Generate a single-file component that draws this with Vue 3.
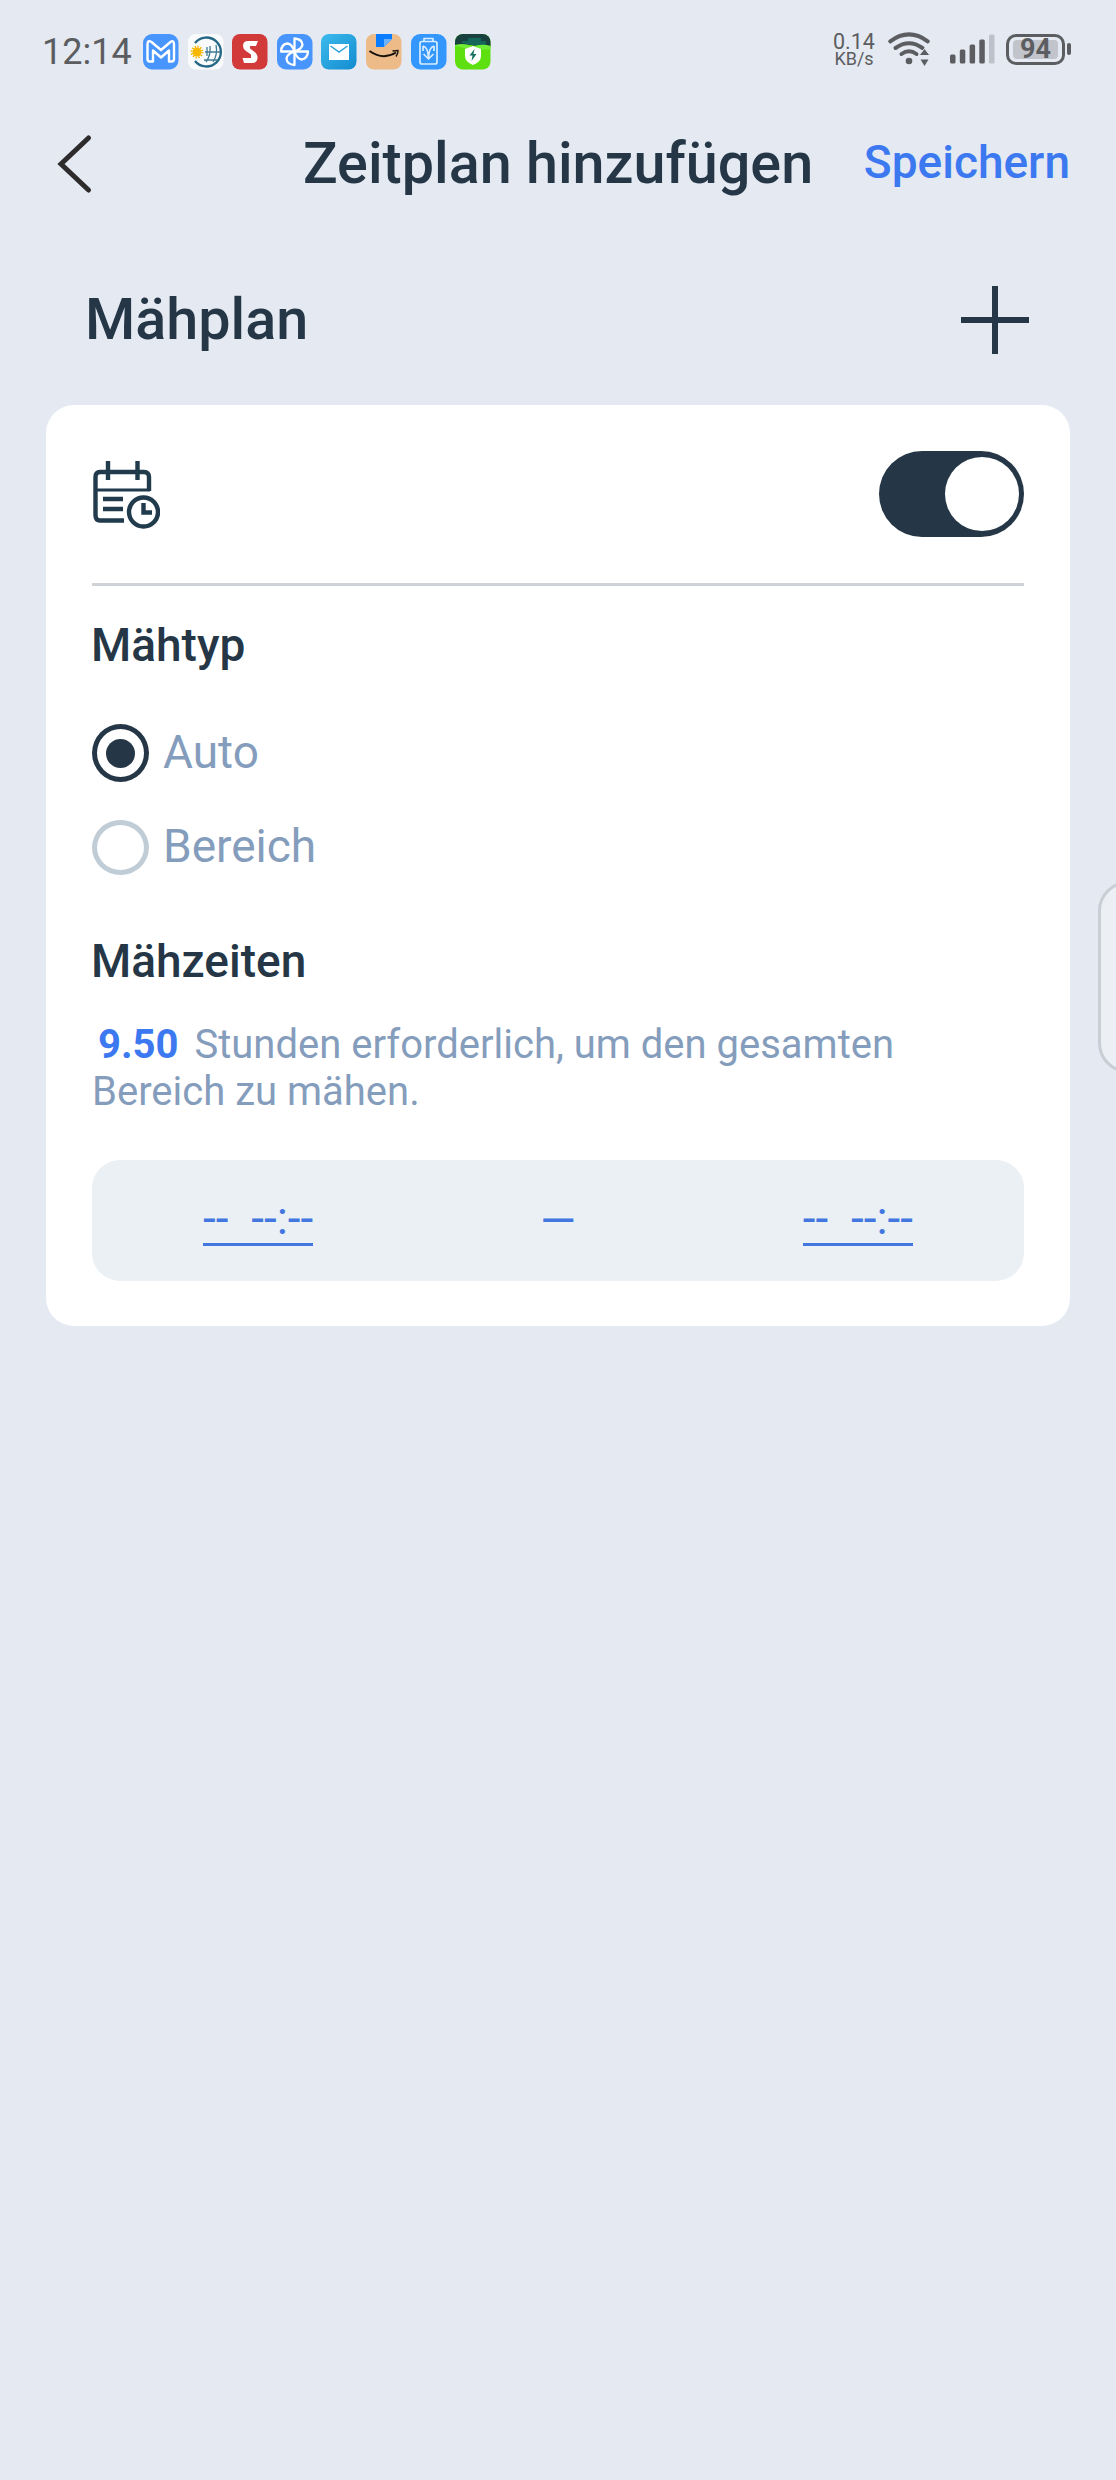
<script setup>
import { ref } from 'vue'

const enabled = ref(true)
const mowType = ref('auto')

const mowTypes = [
  { value: 'auto', label: 'Auto' },
  { value: 'area', label: 'Bereich' }
]

const requiredHours = '9.50'
const emptyTime = '--\u00a0\u00a0--:--'
</script>

<template>
  <div class="screen">
    <div class="status-bar">
      <span class="clock">12:14</span>
      <div class="apps">
        <svg viewBox="0 0 36 36">
          <rect width="35.5" height="35.5" rx="9" fill="#4896fd" />
          <path d="M4.500 25V10.500Q4.500 5.500 8.500 8L18 16L27.500 8Q31 5.500 31 10.500V25Q31 27.500 28.500 27.500H26V16.500L18 23.500L10 16.500V27.500H7Q4.500 27.500 4.500 25Z" fill="none" stroke="#fff" stroke-width="2.400" stroke-linejoin="round" />
        </svg>
        <svg viewBox="0 0 36 36">
          <rect width="35.5" height="35.5" rx="8" fill="#f9fafb" />
          <path d="M7 9A14.500 14.500 0 1 1 7 27" fill="none" stroke="#246786" stroke-width="2.300" />
          <path d="M17 18H32M16 26H30M22 12Q23 21 18 28M28 11Q30 20 25 28M19 13V22" fill="none" stroke="#407b94" stroke-width="1.300" />
          <circle cx="9" cy="18" r="4.500" fill="#f5b700" />
          <circle cx="9" cy="18" r="5.400" fill="none" stroke="#f5b700" stroke-width="2" stroke-dasharray="1.400 1.400" />
        </svg>
        <svg viewBox="0 0 36 36">
          <rect width="35.5" height="35.5" rx="8" fill="#d23939" />
          <path d="M26 7H16Q11 7 11 12Q11 15 14 17L19 20.500V24H10.500L12 29H20Q25.500 29 25.500 23.500Q25.500 20 22 17.500L18 14.500V12H24Z" fill="#fff" />
        </svg>
        <svg viewBox="0 0 36 36">
          <rect width="35.5" height="35.5" rx="9" fill="#4896fd" />
          <g fill="none" stroke="#fff" stroke-width="2.300" stroke-linejoin="round">
            <path d="M17.500 17.500V4.500Q25 5 25.500 10.500Q25 15 17.500 17.500" />
            <path d="M17.500 17.500H31Q30.500 25 24.500 25.500Q20 25 17.500 17.500" />
            <path d="M17.500 17.500V31Q10 30.500 9.500 24.500Q10 20 17.500 17.500" />
            <path d="M17.500 17.500H4Q4.500 10 10.500 9.500Q15 10 17.500 17.500" />
          </g>
        </svg>
        <svg viewBox="0 0 36 36">
          <defs>
            <linearGradient id="mail" x1="0" y1="0" x2="1" y2="1">
              <stop offset="0" stop-color="#3dbbed" />
              <stop offset="1" stop-color="#128bd0" />
            </linearGradient>
          </defs>
          <rect width="35.5" height="35.5" rx="8" fill="url(#mail)" />
          <rect x="8" y="10" width="20" height="16" fill="#fff" />
          <path d="M9.500 12L18 18L26.500 12" fill="none" stroke="#2ba4db" stroke-width="1.500" />
        </svg>
        <svg viewBox="0 0 36 36">
          <rect width="35.5" height="35.5" rx="8" fill="#ecbb88" />
          <path d="M10 0H26V5L18 13H10Z" fill="#0a7cff" />
          <path d="M18 5H26L18 13Z" fill="#6cb2f7" />
          <path d="M3.500 17Q17 26.500 30 18.500" fill="none" stroke="#17120d" stroke-width="2" />
          <path d="M26.500 17L32 16.500Q32.500 19 30 22.500" fill="none" stroke="#17120d" stroke-width="1.400" />
        </svg>
        <svg viewBox="0 0 36 36">
          <rect width="35.5" height="35.5" rx="9" fill="#3397fd" />
          <g fill="none" stroke="#d8edff" stroke-width="1.700" stroke-linejoin="round">
            <rect x="9" y="7.500" width="17" height="22.500" rx="2" />
            <path d="M13 7V4.500H22V7M12 12Q17 13 17.500 24Q18 13 23 12M12 12V17M23 12V17M12.500 20L17.500 25L22.500 20" />
          </g>
        </svg>
        <svg viewBox="0 0 36 36">
          <defs>
            <clipPath id="tile"><rect width="35.5" height="35.5" rx="8" /></clipPath>
          </defs>
          <g clip-path="url(#tile)">
            <rect width="36" height="36" fill="#5ee010" />
            <path d="M0 0H36V12Q28 15 22 12Q10 9 0 12Z" fill="#18403f" />
            <path d="M13 4H26V7H31V11Q21 13 7 9V7H13Z" fill="#14665a" />
            <path d="M0 11Q10 8 17 13Q26 9 36 12V15Q18 17 0 12Z" fill="#70ed35" />
          </g>
          <path d="M18 12L26 15V22Q26 28 18 31Q10 28 10 22V15Z" fill="#fff" />
          <path d="M19.500 15L14.500 21.500H17.500L16.500 27L21.500 20H18.500Z" fill="#167060" />
        </svg>
      </div>

      <div class="speed">
        <span class="rate">0.14</span>
        <span class="unit">KB/s</span>
      </div>
      <svg class="wifi" viewBox="0 0 42 34">
        <g fill="none" stroke="#5c5d60" stroke-width="4" stroke-linecap="round">
          <path d="M2.300 9.300Q21 -4.500 39.700 9.300" />
          <path d="M7.500 16Q21 6.500 34.500 16" />
          <path d="M13.500 22Q21 16.500 28.500 22" />
        </g>
        <circle cx="21" cy="29" r="3.300" fill="#5c5d60" />
        <path d="M36.500 16.500L42 23.500H31Z" fill="#5c5d60" stroke="#e4e8f1" stroke-width="1" />
        <path d="M32.500 27.500H40.500L36.500 34Z" fill="#5c5d60" />
      </svg>
      <svg class="signal" viewBox="0 0 45 30">
        <g fill="#5c5d60">
          <rect x="0" y="20.500" width="5.500" height="9" rx="1.500" />
          <rect x="9.800" y="15.500" width="5.500" height="14" rx="1.500" />
          <rect x="19.600" y="10.500" width="5.500" height="19" rx="1.500" />
          <rect x="29.300" y="5.500" width="5.500" height="24" rx="1.500" />
        </g>
        <rect x="39" y="0.500" width="5.500" height="29" rx="1.500" fill="#bec1c9" />
      </svg>
      <div class="battery">
        <div class="level">94</div>
      </div>
      <div class="battery-tip"></div>
    </div>

    <header class="nav">
      <button class="back" aria-label="Zurück">
        <svg viewBox="0 0 36 60">
          <path d="M31.500 4L4 30L31.500 56" fill="none" stroke="#2d2b2b" stroke-width="5" stroke-linecap="round" />
        </svg>
      </button>
      <h1 class="title">Zeitplan hinzufügen</h1>
      <button class="save">Speichern</button>
    </header>

    <div class="section-head">
      <h2 class="section-title">Mähplan</h2>
      <button class="add" aria-label="Hinzufügen">
        <svg viewBox="0 0 68 68">
          <path d="M0 34H68M34 0V68" stroke="#253746" stroke-width="6" />
        </svg>
      </button>
    </div>

    <main class="card">
      <div class="plan-row">
        <svg class="calendar" viewBox="0 0 68 68" fill="none" stroke="#213a4c" stroke-width="4.400">
          <path d="M57 30V16Q57 11 52 11H8Q3.500 11 3.500 16V54Q3.500 59.500 8 59.500H32" />
          <path d="M3 29H58" stroke-width="3" />
          <path d="M16 0V19M45.500 0V19" />
          <path d="M11 38H31M11 48H31" />
          <circle cx="51.500" cy="51" r="14.500" />
          <path d="M51.500 42V51.500H60" />
        </svg>
        <button class="switch" :class="{ on: enabled }" @click="enabled = !enabled">
          <span class="knob"></span>
        </button>
      </div>

      <h3 class="label type-label">Mähtyp</h3>
      <div
        v-for="type in mowTypes"
        :key="type.value"
        class="option"
        :class="{ selected: mowType === type.value }"
        @click="mowType = type.value"
      >
        <span class="radio"></span>
        <span class="option-text">{{ type.label }}</span>
      </div>

      <h3 class="label time-label">Mähzeiten</h3>
      <p class="hint">
        <strong>{{ requiredHours }}</strong>Stunden erforderlich, um den gesamten Bereich zu mähen.
      </p>

      <div class="times">
        <span class="time">{{ emptyTime }}</span>
        <span class="dash">—</span>
        <span class="time">{{ emptyTime }}</span>
      </div>
    </main>

    <div class="edge-handle"></div>
  </div>
</template>

<style>
body {
  margin: 0;
  background: #e4e9f2;
}
</style>

<style scoped>
.screen {
  position: relative;
  width: 1116px;
  height: 2480px;
  overflow: hidden;
  background: #e4e9f2;
  color: #253746;
  font-family: Roboto, "Liberation Sans", sans-serif;
}

button {
  padding: 0;
  border: none;
  background: none;
  font: inherit;
  cursor: pointer;
}

svg {
  display: block;
}

h1,
h2,
h3,
p {
  margin: 0;
}

.status-bar {
  display: flex;
  align-items: center;
  box-sizing: border-box;
  height: 104px;
  padding: 0 46px 0 42px;
  color: #5c5d60;
}

.clock {
  width: 101px;
  font-size: 36px;
  line-height: 44px;
}

.apps {
  display: flex;
  gap: 8.6px;
}

.apps svg {
  width: 36px;
  height: 36px;
}

.speed {
  display: flex;
  flex-direction: column;
  align-items: center;
  width: 44px;
  margin: -4px 12px 0 auto;
}

.rate {
  font-size: 21.5px;
  line-height: 17px;
}

.unit {
  font-size: 18px;
  line-height: 18px;
}

.wifi {
  width: 42px;
  height: 34px;
}

.signal {
  width: 45px;
  height: 30px;
  margin: 0 11px 0 20px;
}

.battery {
  box-sizing: border-box;
  width: 59px;
  height: 31px;
  padding: 3px 4px;
  border: 3px solid #5c5d60;
  border-radius: 10px;
}

.level {
  height: 19px;
  border-radius: 4px;
  background: #c1c4cb;
  font-size: 27px;
  font-weight: 700;
  line-height: 19px;
  text-align: center;
}

.battery-tip {
  width: 4px;
  height: 12px;
  margin: 0 -1px 0 2px;
  border-radius: 2px;
  background: #5c5d60;
}

.status-bar .wifi,
.status-bar .signal,
.status-bar .battery,
.status-bar .battery-tip {
  position: relative;
  top: -3px;
}

.nav {
  display: flex;
  align-items: center;
  height: 120px;
  padding: 0 46px 0 57px;
}

.back {
  width: 36px;
}

.title {
  margin: -2px 0 0 210px;
  font-size: 57.5px;
  font-weight: 500;
  line-height: 67px;
  white-space: nowrap;
}

.save {
  margin: -5px 0 0 auto;
  color: #3c78f0;
  font-size: 46px;
  font-weight: 500;
  line-height: 54px;
}

.section-head {
  display: flex;
  align-items: center;
  justify-content: space-between;
  height: 192px;
  padding: 0 87px 0 85px;
}

.section-title {
  margin-top: -2px;
  font-size: 57.5px;
  font-weight: 500;
  line-height: 67px;
}

.add {
  width: 68px;
}

.card {
  box-sizing: border-box;
  height: 921px;
  margin: -11px 46px 0;
  padding: 0 46px;
  border-radius: 28px;
  background: #fff;
}

.plan-row {
  display: flex;
  align-items: center;
  justify-content: space-between;
  height: 178px;
  border-bottom: 3px solid #cfd2d6;
}

.calendar {
  width: 68px;
  height: 68px;
  margin-top: 2px;
}

.switch {
  display: flex;
  align-items: center;
  width: 145px;
  height: 86px;
  padding: 0 5px;
  border-radius: 43px;
  background: #c2ccd4;
}

.switch.on {
  justify-content: flex-end;
  background: #253746;
}

.knob {
  width: 74px;
  height: 74px;
  border-radius: 50%;
  background: #fff;
}

.label {
  margin-left: -1px;
  font-size: 46px;
  font-weight: 500;
  line-height: 54px;
}

.type-label {
  margin-top: 32px;
  margin-bottom: 52px;
}

.option {
  display: flex;
  align-items: center;
  gap: 14px;
  height: 58px;
  margin-bottom: 36px;
  color: #859dbc;
  font-size: 46px;
  line-height: 54px;
}

.option-text {
  margin-top: -3px;
}

.radio {
  display: flex;
  align-items: center;
  justify-content: center;
  box-sizing: border-box;
  width: 57px;
  height: 55px;
  border: 5px solid #c0ccd6;
  border-radius: 50%;
}

.selected .radio {
  height: 58px;
  border-color: #253746;
}

.selected .radio::after {
  width: 29px;
  height: 29px;
  border-radius: 50%;
  background: #253746;
  content: "";
}

.time-label {
  margin-top: 58px;
  margin-bottom: 33px;
}

.hint {
  color: #859dbc;
  font-size: 40px;
  line-height: 47px;
}

.hint strong {
  margin: 0 16px 0 6px;
  color: #3c78f0;
  font-weight: 700;
}

.times {
  display: flex;
  align-items: center;
  justify-content: space-between;
  height: 121px;
  margin-top: 45px;
  padding: 0 111px;
  border-radius: 28px;
  background: #ebf0f5;
  color: #4377e0;
  font-size: 46px;
}

.time {
  padding-bottom: 2px;
  line-height: 45px;
  border-bottom: 3px solid #4377e0;
}

.dash {
  line-height: 54px;
}

/* system edge panel handle, runs off the right side */
.edge-handle {
  position: absolute;
  top: 881px;
  right: -30px;
  box-sizing: border-box;
  width: 48px;
  height: 192px;
  border: 3px solid #c9cdd4;
  border-radius: 30px 0 0 30px;
  background: #ecf0f5;
}
</style>
